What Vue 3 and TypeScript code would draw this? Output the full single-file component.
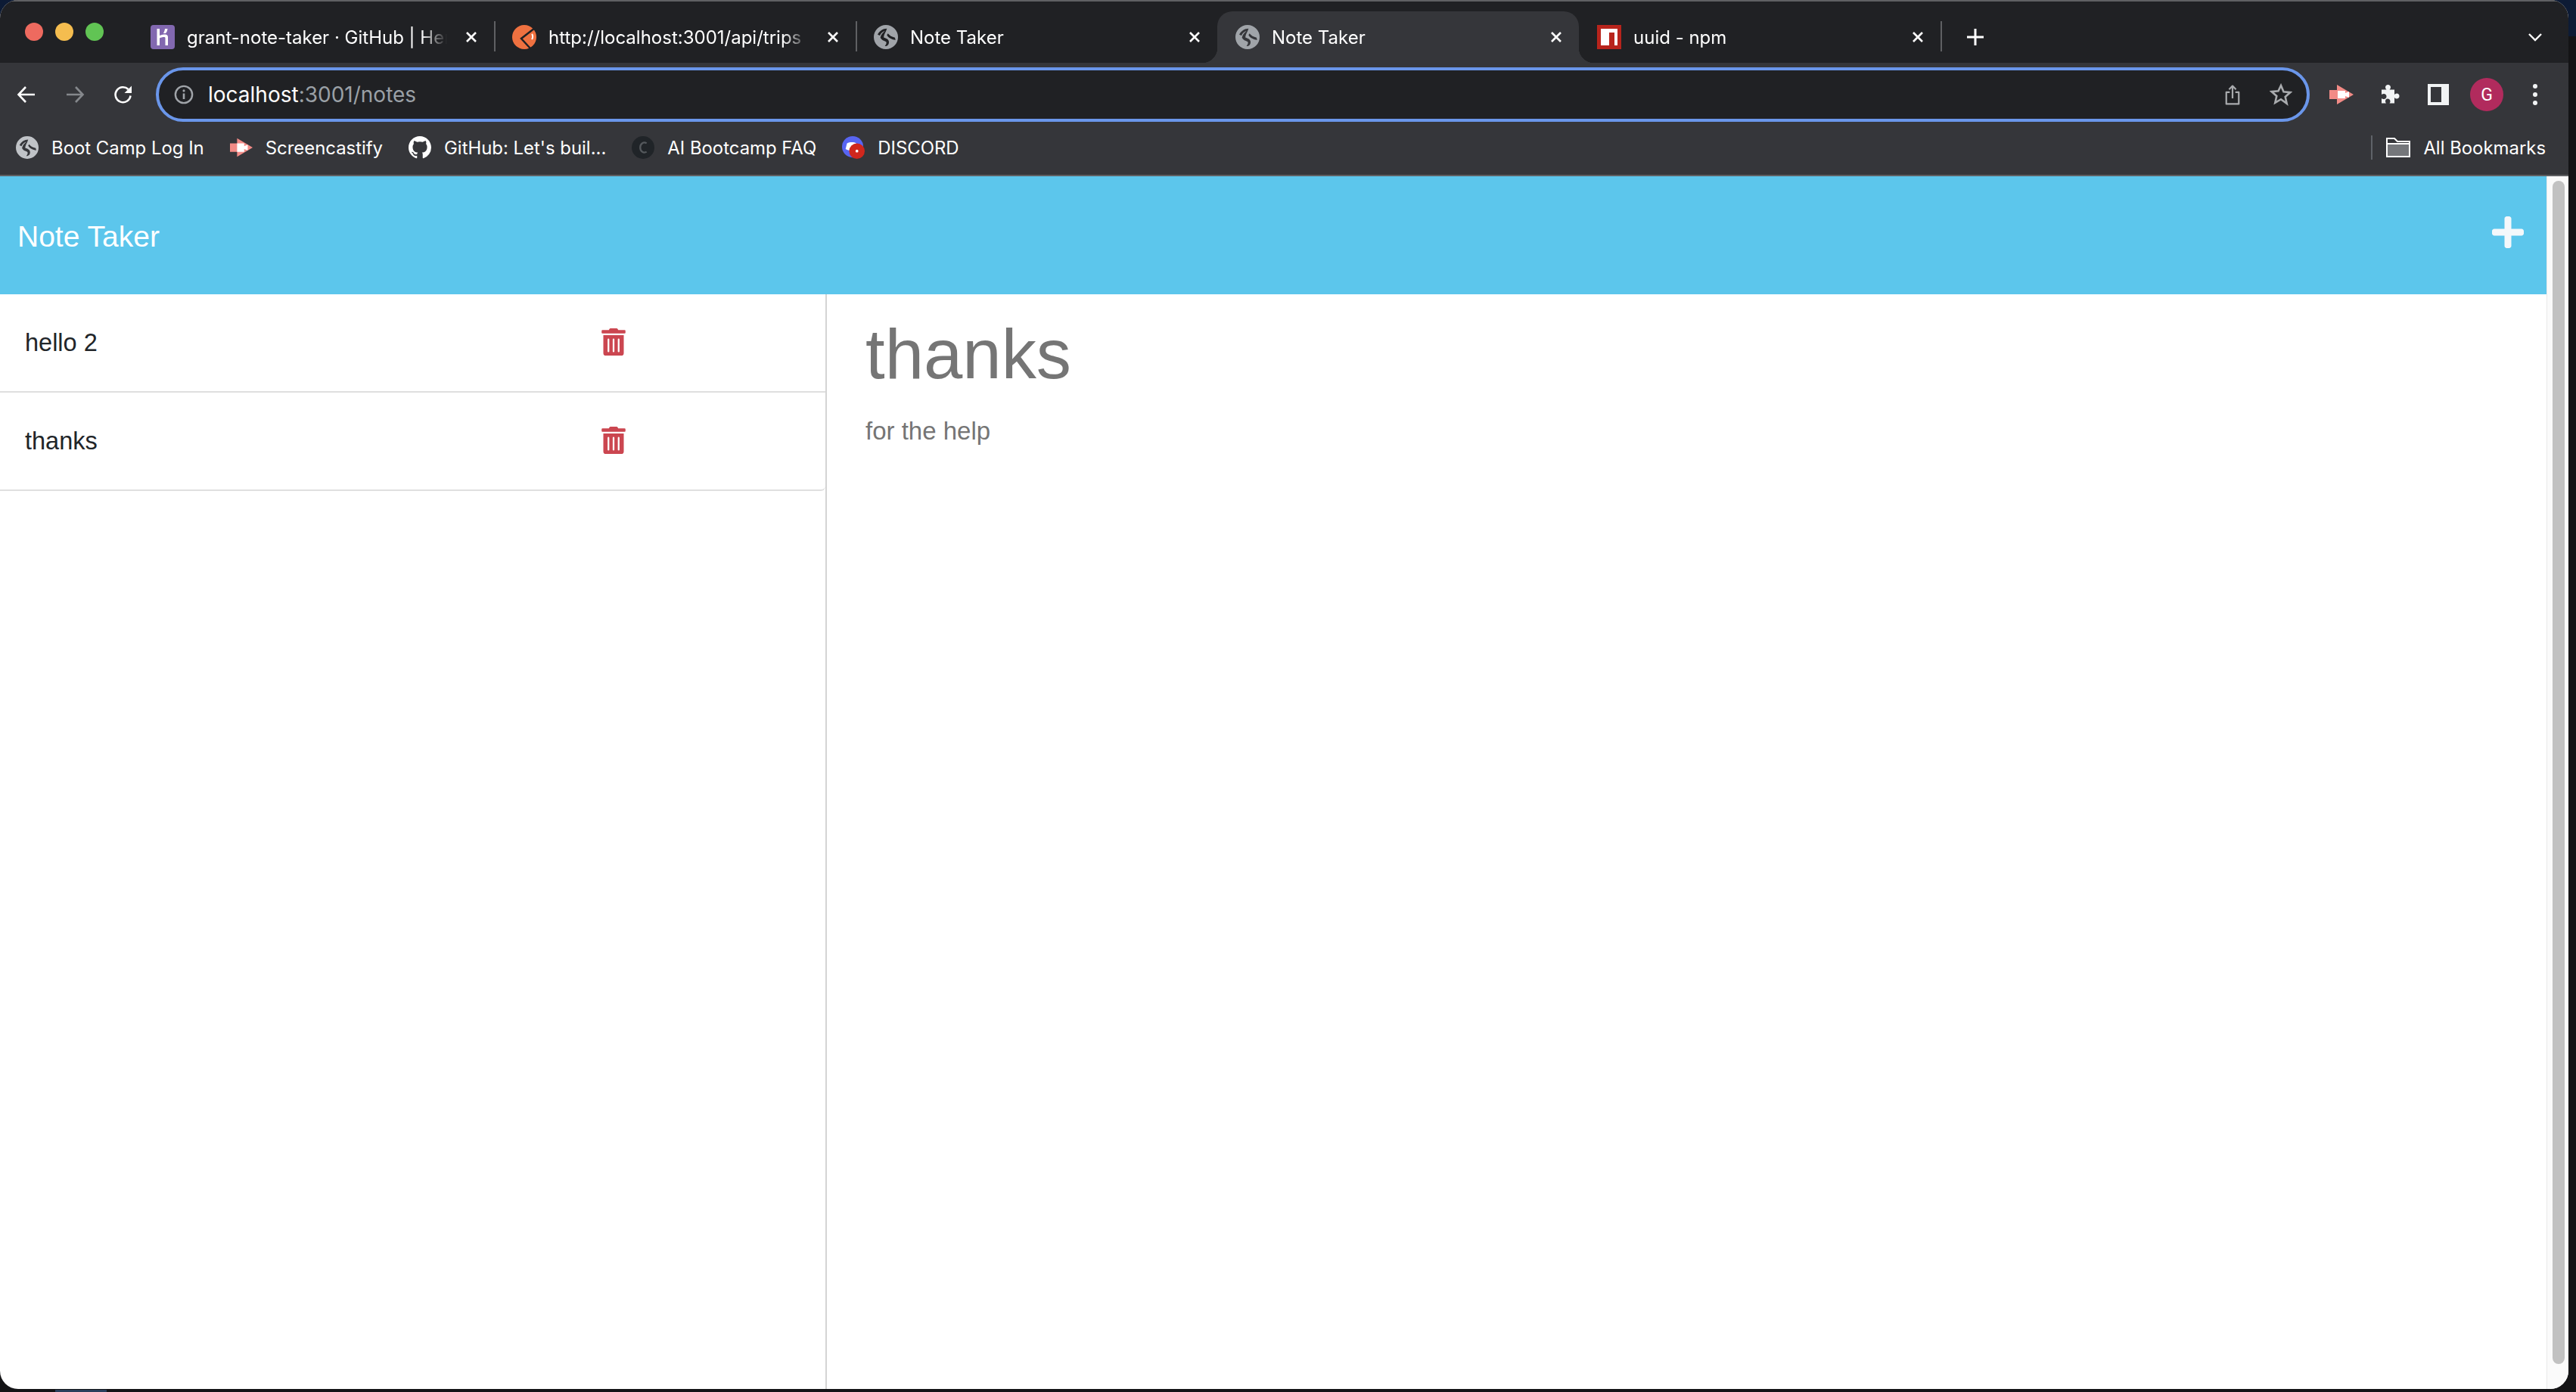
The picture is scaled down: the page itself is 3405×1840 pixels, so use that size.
<script setup lang="ts">
const tabs = [
  { title: "grant-note-taker · GitHub | Heroku", icon: "heroku" },
  { title: "http://localhost:3001/api/trips", icon: "orange" },
  { title: "Note Taker", icon: "globe" },
  { title: "Note Taker", icon: "globe", active: true },
  { title: "uuid - npm", icon: "npm" },
];

const notes = [
  { id: 1, title: "hello 2" },
  { id: 2, title: "thanks" },
];

const globePath =
  "M12 0a12 12 0 1 0 0 24 12 12 0 0 0 0-24zM13 3.500C9 3.500 5.500 6 3.800 9.500L6 10.500C7 8 9 6.500 11 6 8.500 8 7 10 6.500 12.500 8 15.500 10.500 15.500 12 16.500 13 17.500 12.500 19 11 21 14 21 15 19 15 17 15 14 12 13 10 12.500 9.500 10 12 7 13 3.500zM14 8.500C15.500 10.500 18 12 21 12.500L21.500 15C18 14.500 14.500 13 13 10z";
const githubPath =
  "M8 0C3.58 0 0 3.58 0 8c0 3.54 2.29 6.53 5.47 7.59.4.07.55-.17.55-.38 0-.19-.01-.82-.01-1.49-2.01.37-2.53-.49-2.69-.94-.09-.23-.48-.94-.82-1.13-.28-.15-.68-.52-.01-.53.63-.01 1.08.58 1.23.82.72 1.21 1.87.87 2.33.66.07-.52.28-.87.51-1.07-1.78-.2-3.64-.89-3.64-3.95 0-.87.31-1.59.82-2.15-.08-.2-.36-1.02.08-2.12 0 0 .67-.21 2.2.82.64-.18 1.32-.27 2-.27.68 0 1.36.09 2 .27 1.53-1.04 2.2-.82 2.2-.82.44 1.1.16 1.92.08 2.12.51.56.82 1.27.82 2.15 0 3.07-1.87 3.75-3.65 3.95.29.25.54.73.54 1.48 0 1.07-.01 1.93-.01 2.2 0 .21.15.46.55.38A8.013 8.013 0 0016 8c0-4.42-3.58-8-8-8z";
const trashPath =
  "M32 464a48 48 0 0 0 48 48h288a48 48 0 0 0 48-48V128H32zm272-256a16 16 0 0 1 32 0v224a16 16 0 0 1-32 0zm-96 0a16 16 0 0 1 32 0v224a16 16 0 0 1-32 0zm-96 0a16 16 0 0 1 32 0v224a16 16 0 0 1-32 0zM432 32H312l-9.4-18.7A24 24 0 0 0 281.1 0H166.8a23.72 23.72 0 0 0-21.4 13.3L136 32H16A16 16 0 0 0 0 48v32a16 16 0 0 0 16 16h416a16 16 0 0 0 16-16V48a16 16 0 0 0-16-16z";
</script>

<template>
  <div class="desktop">
    <div class="window">
      <div class="tabstrip">
        <div class="lights">
          <span class="light red"></span>
          <span class="light yellow"></span>
          <span class="light green"></span>
        </div>
        <div v-for="tab in tabs" :key="tab.title + tab.icon + tab.active" class="tab" :class="{ active: tab.active }">
          <svg v-if="tab.icon === 'heroku'" class="favicon" viewBox="0 0 32 32">
            <rect x="0" y="0" width="32" height="32" rx="4" fill="#8268b0" />
            <path d="M8.500 5H12v9c3-1.200 5.500-1.500 7.500-1.500s3.500 1.500 3.500 3.500v11h-3.500v-9.500c0-1-.5-1.500-1.500-1.500-2 0-4.500.5-6 1.500V27H8.500zM19 5h3.500c-.3 2.500-1 4.500-2.500 6h-3c1-2 1.800-4 2-6z" fill="#fff" />
          </svg>
          <svg v-else-if="tab.icon === 'orange'" class="favicon" viewBox="0 0 32 32">
            <circle cx="16" cy="16" r="16" fill="#ef7140" />
            <path d="M30 4 12 18l12 13" fill="none" stroke="#202124" stroke-width="2.500" />
            <path d="M26 12c1.500 1.500 1.500 5 0 7" fill="none" stroke="#fff" stroke-width="2" />
          </svg>
          <svg v-else-if="tab.icon === 'npm'" class="favicon" viewBox="0 0 32 32">
            <rect width="32" height="32" fill="#b8241c" />
            <path d="M5 5h22v22h-4V10h-7v17H5z" fill="#fff" />
          </svg>
          <svg v-else class="favicon" viewBox="0 0 24 24">
            <path :d="globePath" fill="#a0a4a9" fill-rule="evenodd" />
          </svg>
          <span class="tab-title">{{ tab.title }}</span>
          <svg class="tab-close" viewBox="0 0 16 16">
            <path d="M2 2l12 12M14 2 2 14" stroke="#fff" stroke-width="2.600" fill="none" />
          </svg>
        </div>
        <svg class="new-tab" viewBox="0 0 24 24">
          <path d="M12 1v22M1 12h22" stroke="#fff" stroke-width="3" fill="none" />
        </svg>
        <svg class="tab-search" viewBox="0 0 20 14">
          <path d="M2 3l8 8 8-8" stroke="#fff" stroke-width="2.400" fill="none" />
        </svg>
      </div>

      <div class="toolbar">
        <svg class="nav" viewBox="0 0 28 28">
          <path d="M25 14H4M13 4 3.500 14 13 24" stroke="#fff" stroke-width="2.600" fill="none" />
        </svg>
        <svg class="nav" viewBox="0 0 28 28">
          <path d="M3 14h21M15 4l9.500 10L15 24" stroke="#85888c" stroke-width="2.600" fill="none" />
        </svg>
        <svg class="nav" viewBox="0 0 28 28">
          <path d="M23.500 15.500a10 10 0 1 1-3-8.500" stroke="#fff" stroke-width="2.600" fill="none" />
          <path d="M25 2.500v9.500h-9.500z" fill="#fff" />
        </svg>
        <div class="omnibox">
          <svg class="info" viewBox="0 0 28 28">
            <circle cx="14" cy="14" r="12" stroke="#a0a4a9" stroke-width="2.600" fill="none" />
            <path d="M14 12.500v8" stroke="#a0a4a9" stroke-width="2.800" />
            <circle cx="14" cy="8.500" r="1.700" fill="#a0a4a9" />
          </svg>
          <span class="url">localhost<span class="url-rest">:3001/notes</span></span>
          <svg class="share" viewBox="0 0 24 30">
            <path d="M8 11H3v17h18V11h-5M12 20V3M7 7l5-5 5 5" stroke="#a9abae" stroke-width="2.400" fill="none" stroke-linejoin="round" />
          </svg>
          <svg class="star" viewBox="0 0 30 30">
            <path d="M15 3l3.500 8.300 8.900.8-6.700 5.900 2 8.800L15 21.200l-7.700 4.600 2-8.800-6.700-5.900 8.900-.8z" stroke="#a9abae" stroke-width="2.600" fill="none" />
          </svg>
        </div>
        <div class="extensions">
          <svg class="ext-icon cast" viewBox="0 0 32 32">
            <path d="M10 10H0v12h10zM10 3l22 13-22 13z" fill="#f28b86" />
            <path d="M11 11h10v10H11zM21 14l5-2v8l-5-2z" fill="#fff" />
          </svg>
          <svg class="ext-icon" viewBox="0 0 28 28">
            <path d="M3 7.500h6.500c-1-1-1.500-2-1.500-3C8 2.500 9.500 1 11.500 1S15 2.500 15 4.500c0 1-.5 2-1.500 3H20V14c1-1 2-1.500 3-1.500 2 0 3.500 1.500 3.500 3.500S25 19.500 23 19.500c-1 0-2-.5-3-1.500v7.500h-6.500c.8-1 1-1.700 1-2.500 0-2-1.500-3.500-3.500-3.500S8 21 8 23c0 .8.300 1.500 1 2.500H3V19c1 .8 2 1 3 1 2 0 3.500-1.500 3.500-3.500S8 13 6 13c-1 0-2 .3-3 1z" fill="#f1f3f4" />
          </svg>
          <svg class="ext-icon" viewBox="0 0 28 28">
            <path d="M0 0h28v28H0zM4 4v20h14V4z" fill="#f1f3f4" fill-rule="evenodd" />
          </svg>
          <div class="avatar">G</div>
          <div class="dots"><i></i><i></i><i></i></div>
        </div>
      </div>

      <div class="bookmarks">
        <div class="bookmark first">
          <svg class="mark" viewBox="0 0 24 24"><path :d="globePath" fill="#c0c3c7" fill-rule="evenodd" /></svg>
          <span>Boot Camp Log In</span>
        </div>
        <div class="bookmark">
          <svg class="mark" viewBox="0 0 32 32">
            <path d="M10 10H0v12h10zM10 3l22 13-22 13z" fill="#f28b86" />
            <path d="M10 10h10v12H10zM20 14l5-2v8l-5-2z" fill="#fff" />
          </svg>
          <span>Screencastify</span>
        </div>
        <div class="bookmark">
          <svg class="mark" viewBox="0 0 16 16"><path :d="githubPath" fill="#fff" /></svg>
          <span>GitHub: Let's buil...</span>
        </div>
        <div class="bookmark">
          <svg class="mark" viewBox="0 0 32 32">
            <circle cx="16" cy="16" r="16" fill="#202428" />
            <path d="M21 10c-4-2.500-9 0-9 6s5 8.500 9 6" stroke="#54585c" stroke-width="2.500" fill="none" />
          </svg>
          <span>AI Bootcamp FAQ</span>
        </div>
        <div class="bookmark">
          <svg class="mark" viewBox="0 0 32 32">
            <circle cx="15" cy="15" r="15" fill="#5865f2" />
            <path d="M7 10c4-2 10-2 13 0l2 8c-2 2-5 2-6 2H11c-2 0-4-1-6-2z" fill="#fff" />
            <circle cx="21" cy="21" r="11" fill="#d0271d" />
            <circle cx="21" cy="21" r="2" fill="#fff" />
          </svg>
          <span>DISCORD</span>
        </div>
        <div class="all-bookmarks">
          <span class="divider"></span>
          <svg class="folder" viewBox="0 0 32 26">
            <path d="M1 9h30v16H1z" fill="#75777b" />
            <path d="M1 25V1h10l4 4h16v20zM1 8h30" stroke="#fff" stroke-width="2" fill="none" />
          </svg>
          <span>All Bookmarks</span>
        </div>
      </div>

      <div class="page">
        <div class="page-main">
          <nav class="navbar">
            <span class="brand">Note Taker</span>
            <svg class="add" viewBox="0 0 448 448">
              <path d="M416 176H272V32c0-17.700-14.300-32-32-32h-32c-17.700 0-32 14.300-32 32v144H32c-17.700 0-32 14.300-32 32v32c0 17.700 14.300 32 32 32h144v144c0 17.700 14.300 32 32 32h32c17.700 0 32-14.300 32-32V272h144c17.700 0 32-14.300 32-32v-32c0-17.700-14.300-32-32-32z" fill="#f4f8fb" />
            </svg>
          </nav>
          <div class="content">
            <aside class="sidebar">
              <div v-for="note in notes" :key="note.id" class="note-row">
                <span class="note-title">{{ note.title }}</span>
                <svg class="trash" viewBox="0 0 448 512"><path :d="trashPath" fill="#cb4650" /></svg>
              </div>
            </aside>
            <main class="detail">
              <h1 class="detail-title">thanks</h1>
              <p class="detail-text">for the help</p>
            </main>
          </div>
        </div>
        <div class="scrollbar"><div class="thumb"></div></div>
      </div>
    </div>
  </div>
</template>

<style>
html,
body {
  margin: 0;
  background: #0e0e0f;
}
</style>

<style scoped>
.desktop {
  width: 3405px;
  height: 1840px;
  box-sizing: border-box;
  padding: 0 10px 4px 0;
  overflow: hidden;
  background:
    linear-gradient(#2a3f5c, #2a3f5c) 73px 100% / 68px 3px no-repeat,
    linear-gradient(#0d1b35 0 48px, #141416 48px);
}

.window {
  height: 100%;
  display: flex;
  flex-direction: column;
  overflow: hidden;
  border-radius: 24px;
  background: #fff;
  font-family: Inter, "Liberation Sans", sans-serif;
}

.tabstrip {
  height: 83px;
  flex: none;
  box-sizing: border-box;
  border-top: 2px solid #5f6063;
  display: flex;
  align-items: flex-end;
  padding-left: 175px;
  position: relative;
  background: #202124;
  color: #fff;
}

.lights {
  position: absolute;
  left: 33px;
  top: 28px;
  display: flex;
  gap: 16px;
}

.light {
  width: 24px;
  height: 24px;
  border-radius: 50%;
}

.red {
  background: #ee6a5f;
}

.yellow {
  background: #f5bd4f;
}

.green {
  background: #61c454;
}

.tab {
  width: 478px;
  height: 68px;
  box-sizing: border-box;
  flex: none;
  display: flex;
  align-items: center;
  padding: 0 22px 0 24px;
  position: relative;
  font-size: 24px;
}

.tab:not(.active):not(:nth-child(4))::after {
  content: "";
  position: absolute;
  right: -2px;
  top: 13px;
  width: 2px;
  height: 40px;
  background: #5f6063;
}

.tab.active {
  background: #35363a;
  border-radius: 20px 20px 0 0;
}

.tab.active::before,
.tab.active::after {
  content: "";
  position: absolute;
  bottom: 0;
  width: 20px;
  height: 20px;
}

.tab.active::before {
  left: -20px;
  background: radial-gradient(circle at 0 0, #202124 20px, #35363a 20.5px);
}

.tab.active::after {
  right: -20px;
  background: radial-gradient(circle at 100% 0, #202124 20px, #35363a 20.5px);
}

.favicon {
  width: 32px;
  height: 32px;
  flex: none;
}

.tab-title {
  margin-left: 16px;
  flex: 1;
  min-width: 0;
  white-space: nowrap;
  overflow: hidden;
  -webkit-mask-image: linear-gradient(to right, #000 90%, transparent);
  mask-image: linear-gradient(to right, #000 90%, transparent);
}

.tab-close {
  width: 16px;
  height: 16px;
  flex: none;
  margin-left: 24px;
}

.new-tab {
  width: 24px;
  height: 24px;
  margin: 0 0 22px 34px;
  flex: none;
}

.tab-search {
  width: 20px;
  height: 14px;
  margin: 0 34px 27px auto;
  flex: none;
}

.toolbar {
  height: 84px;
  flex: none;
  display: flex;
  align-items: center;
  gap: 36px;
  padding-left: 21px;
  box-sizing: border-box;
  background: #35363a;
}

.nav {
  width: 28px;
  height: 28px;
  flex: none;
}

.omnibox {
  width: 2847px;
  height: 72px;
  box-sizing: border-box;
  flex: none;
  margin-left: -7px;
  border: 4px solid #6a96ea;
  border-radius: 36px;
  display: flex;
  align-items: center;
  padding: 0 19px 0 20px;
  background: #202124;
}

.info {
  width: 26px;
  height: 26px;
  flex: none;
}

.url {
  margin-left: 19px;
  font-size: 28px;
  color: #fff;
}

.url-rest {
  color: #9aa0a6;
}

.share {
  width: 22px;
  height: 29px;
  margin-left: auto;
}

.star {
  width: 30px;
  height: 30px;
  margin-left: 38px;
}

.extensions {
  display: flex;
  align-items: center;
  margin-left: -10px;
}

.ext-icon {
  width: 28px;
  height: 28px;
  flex: none;
  margin-right: 36px;
}

.ext-icon.cast {
  width: 32px;
  height: 32px;
  margin-right: 34px;
}

.avatar {
  width: 44px;
  height: 44px;
  margin-left: -8px;
  border-radius: 50%;
  display: flex;
  align-items: center;
  justify-content: center;
  font-size: 23px;
  font-family: Roboto, sans-serif;
  color: #fff;
  background: #b12b5d;
}

.dots {
  margin-left: 39px;
  display: flex;
  flex-direction: column;
  gap: 5px;
}

.dots i {
  width: 6px;
  height: 6px;
  border-radius: 50%;
  background: #f1f3f4;
}

.bookmarks {
  height: 66px;
  flex: none;
  box-sizing: border-box;
  border-bottom: 2px solid #5f6063;
  display: flex;
  align-items: center;
  padding: 0 30px 8px 21px;
  gap: 34px;
  font-size: 23.900px;
  color: #fff;
  background: #35363a;
}

.bookmark {
  display: flex;
  align-items: center;
  gap: 17px;
  white-space: nowrap;
}

.mark {
  width: 30px;
  height: 30px;
  flex: none;
}

.all-bookmarks {
  margin-left: auto;
  display: flex;
  align-items: center;
  white-space: nowrap;
}

.divider {
  width: 2px;
  height: 32px;
  margin-right: 18px;
  background: #5f6368;
}

.folder {
  width: 32px;
  height: 26px;
  margin-right: 17px;
}

.page {
  flex: 1;
  min-height: 0;
  display: flex;
}

.page-main {
  flex: 1;
  min-width: 0;
  display: flex;
  flex-direction: column;
  font-family: "Liberation Sans", Arial, sans-serif;
}

.navbar {
  height: 156px;
  box-sizing: border-box;
  flex: none;
  display: flex;
  align-items: center;
  justify-content: space-between;
  padding: 4px 30px 0 23px;
  background: #5cc6ec;
}

.brand {
  font-size: 39px;
  color: #fff;
}

.add {
  width: 42px;
  height: 42px;
  margin-bottom: 12px;
}

.content {
  flex: 1;
  min-height: 0;
  display: flex;
}

.sidebar {
  width: 1093px;
  box-sizing: border-box;
  flex: none;
  border-right: 2px solid #d4d4d4;
}

.note-row {
  height: 130px;
  box-sizing: border-box;
  display: flex;
  align-items: center;
  justify-content: space-between;
  padding: 0 264px 0 33px;
  border-bottom: 2px solid #dfdfdf;
}

.note-row:last-child {
  border-bottom-right-radius: 6px;
}

.note-title {
  font-size: 32.500px;
  color: #212529;
}

.trash {
  width: 32px;
  height: 36px;
  margin-bottom: 2px;
}

.detail {
  flex: 1;
  padding: 0 0 0 51px;
  color: #757575;
}

.detail-title {
  margin: 24px 0 0;
  font-size: 92.300px;
  font-weight: 400;
  line-height: 1.200;
}

.detail-text {
  margin: 21px 0 0;
  font-size: 33px;
  line-height: 1.500;
}

.scrollbar {
  width: 29px;
  flex: none;
  box-sizing: border-box;
  border-left: 1px solid #e9e9e9;
  padding: 6px 5px 0 7px;
  background: #fafafa;
}

.thumb {
  height: 1564px;
  border-radius: 8px;
  background: #c1c1c1;
}
</style>
